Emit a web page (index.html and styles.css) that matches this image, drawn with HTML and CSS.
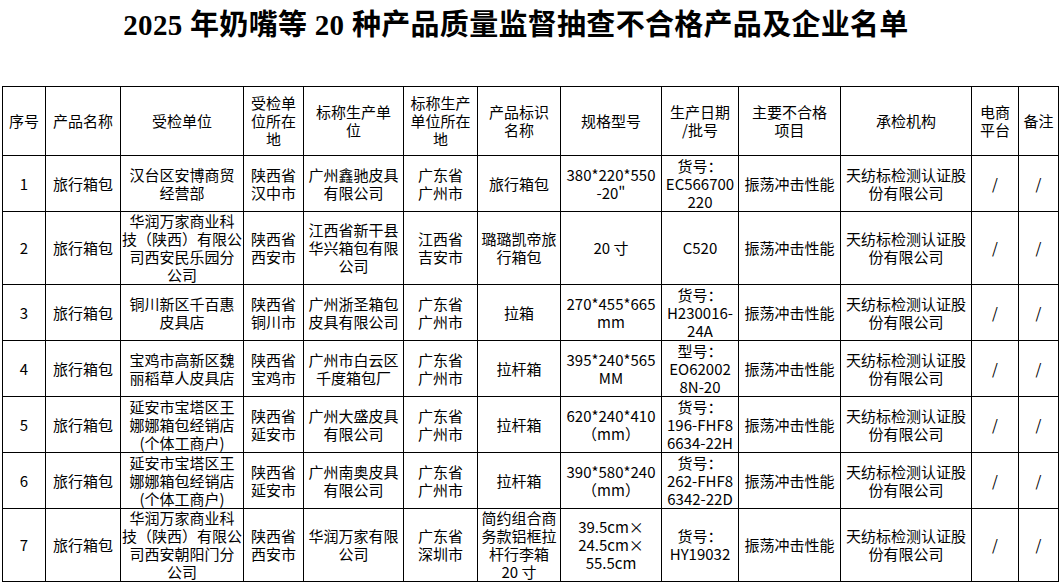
FILE: index.html
```html
<!DOCTYPE html>
<html lang="zh-CN">
<head>
<meta charset="utf-8">
<title>2025 年奶嘴等 20 种产品质量监督抽查不合格产品及企业名单</title>
<link rel="stylesheet" href="styles.css">
</head>
<body>
<div class="page">
  <h1 class="title">2025 年奶嘴等 20 种产品质量监督抽查不合格产品及企业名单</h1>
  <table class="list">
    <colgroup>
      <col class="c1"><col class="c2"><col class="c3"><col class="c4"><col class="c5"><col class="c6"><col class="c7"><col class="c8"><col class="c9"><col class="c10"><col class="c11"><col class="c12"><col class="c13">
    </colgroup>
    <thead>
      <tr class="head">
        <th>序号</th>
        <th>产品名称</th>
        <th>受检单位</th>
        <th>受检单<br>位所在<br>地</th>
        <th>标称生产单<br>位</th>
        <th>标称生产<br>单位所在<br>地</th>
        <th>产品标识<br>名称</th>
        <th>规格型号</th>
        <th>生产日期<br>/批号</th>
        <th>主要不合格<br>项目</th>
        <th>承检机构</th>
        <th>电商<br>平台</th>
        <th>备注</th>
      </tr>
    </thead>
    <tbody>
      <tr class="r3">
        <td>1</td><td>旅行箱包</td><td>汉台区安博商贸<br>经营部</td><td>陕西省<br>汉中市</td><td>广州鑫驰皮具<br>有限公司</td><td>广东省<br>广州市</td><td>旅行箱包</td><td>380*220*550<br>-20"</td><td>货号：<br>EC566700<br>220</td><td>振荡冲击性能</td><td>天纺标检测认证股<br>份有限公司</td><td>/</td><td>/</td>
      </tr>
      <tr class="r4">
        <td>2</td><td>旅行箱包</td><td>华润万家商业科<br>技（陕西）有限公<br>司西安民乐园分<br>公司</td><td>陕西省<br>西安市</td><td>江西省新干县<br>华兴箱包有限<br>公司</td><td>江西省<br>吉安市</td><td>璐璐凯帝旅<br>行箱包</td><td>20 寸</td><td>C520</td><td>振荡冲击性能</td><td>天纺标检测认证股<br>份有限公司</td><td>/</td><td>/</td>
      </tr>
      <tr class="r3">
        <td>3</td><td>旅行箱包</td><td>铜川新区千百惠<br>皮具店</td><td>陕西省<br>铜川市</td><td>广州浙圣箱包<br>皮具有限公司</td><td>广东省<br>广州市</td><td>拉箱</td><td>270*455*665<br>mm</td><td>货号：<br>H230016-<br>24A</td><td>振荡冲击性能</td><td>天纺标检测认证股<br>份有限公司</td><td>/</td><td>/</td>
      </tr>
      <tr class="r3">
        <td>4</td><td>旅行箱包</td><td>宝鸡市高新区魏<br>丽稻草人皮具店</td><td>陕西省<br>宝鸡市</td><td>广州市白云区<br>千度箱包厂</td><td>广东省<br>广州市</td><td>拉杆箱</td><td>395*240*565<br>MM</td><td>型号：<br>EO62002<br>8N-20</td><td>振荡冲击性能</td><td>天纺标检测认证股<br>份有限公司</td><td>/</td><td>/</td>
      </tr>
      <tr class="r3">
        <td>5</td><td>旅行箱包</td><td>延安市宝塔区王<br>娜娜箱包经销店<br>(个体工商户)</td><td>陕西省<br>延安市</td><td>广州大盛皮具<br>有限公司</td><td>广东省<br>广州市</td><td>拉杆箱</td><td>620*240*410<br>（mm）</td><td>货号：<br>196-FHF8<br>6634-22H</td><td>振荡冲击性能</td><td>天纺标检测认证股<br>份有限公司</td><td>/</td><td>/</td>
      </tr>
      <tr class="r3">
        <td>6</td><td>旅行箱包</td><td>延安市宝塔区王<br>娜娜箱包经销店<br>(个体工商户)</td><td>陕西省<br>延安市</td><td>广州南奥皮具<br>有限公司</td><td>广东省<br>广州市</td><td>拉杆箱</td><td>390*580*240<br>（mm）</td><td>货号：<br>262-FHF8<br>6342-22D</td><td>振荡冲击性能</td><td>天纺标检测认证股<br>份有限公司</td><td>/</td><td>/</td>
      </tr>
      <tr class="r4">
        <td>7</td><td>旅行箱包</td><td>华润万家商业科<br>技（陕西）有限公<br>司西安朝阳门分<br>公司</td><td>陕西省<br>西安市</td><td>华润万家有限<br>公司</td><td>广东省<br>深圳市</td><td>简约组合商<br>务款铝框拉<br>杆行李箱<br>20 寸</td><td>39.5cm×<br>24.5cm×<br>55.5cm</td><td>货号：<br>HY19032</td><td>振荡冲击性能</td><td>天纺标检测认证股<br>份有限公司</td><td>/</td><td>/</td>
      </tr>
    </tbody>
  </table>
</div>
</body>
</html>
```
FILE: styles.css
```css
html, body {
  margin: 0;
  padding: 0;
  background: #ffffff;
}

.page {
  width: 1061px;
  padding: 0 0 0 2px;
  box-sizing: border-box;
  color: #000000;
}

.title {
  margin: 0;
  height: 86px;
  padding: 0 31px 0 0;
  box-sizing: border-box;
  font-family: "Liberation Serif", "Noto Sans CJK SC", serif;
  font-weight: 700;
  font-size: 29px;
  line-height: 50px;
  text-align: center;
  letter-spacing: 0.3px;
}

.list {
  border-collapse: collapse;
  table-layout: fixed;
  width: 1056px;
  font-family: "Noto Sans CJK SC", "Noto Sans", sans-serif;
  font-size: 15px;
  line-height: 18px;
}

.list th,
.list td {
  border: 1px solid #000000;
  padding: 0;
  text-align: center;
  vertical-align: middle;
  white-space: nowrap;
  font-weight: 400;
  overflow: visible;
}

.c1 { width: 43px; }
.c2 { width: 75px; }
.c3 { width: 123px; }
.c4 { width: 60px; }
.c5 { width: 100px; }
.c6 { width: 74px; }
.c7 { width: 83px; }
.c8 { width: 101px; }
.c9 { width: 77px; }
.c10 { width: 102px; }
.c11 { width: 131px; }
.c12 { width: 47px; }
.c13 { width: 40px; }

.head th { height: 68px; }
.r3 td { height: 55px; }
.r4 td { height: 72px; }
```
